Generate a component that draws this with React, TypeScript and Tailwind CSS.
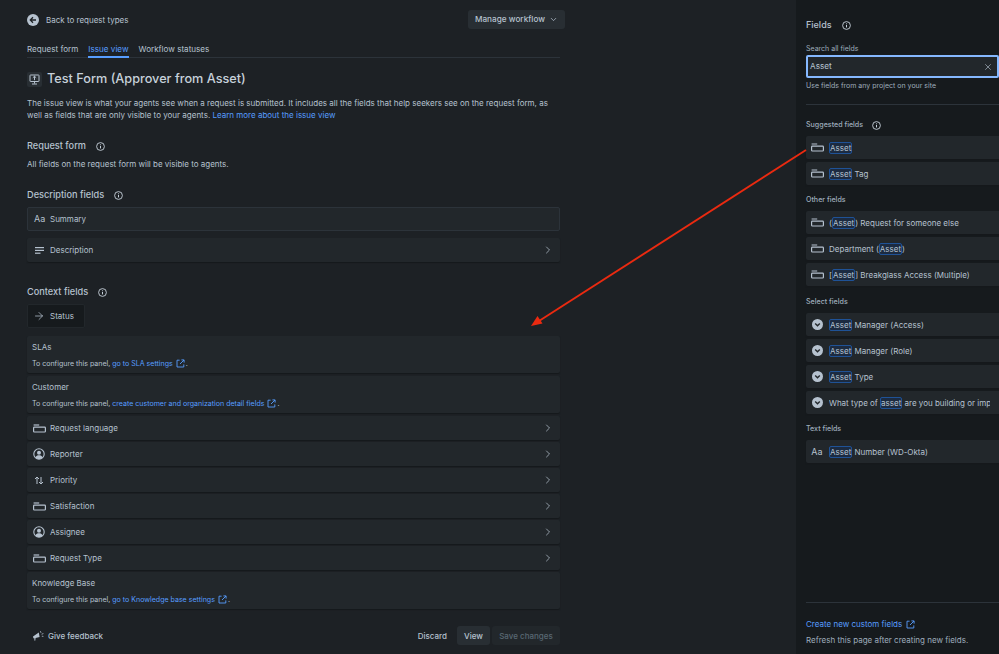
import React from "react";
import { ChevronDown, ChevronRight, X, ArrowRight } from "lucide-react";

const FieldIcon = () => (
  <svg width="13" height="9" viewBox="0 0 13 9" fill="none" stroke="#b6c2cf" strokeWidth="1.2" className="shrink-0">
    <path d="M0.6 1H6.2" />
    <rect x="0.6" y="3.2" width="11.8" height="4.8" rx="0.8" />
  </svg>
);
const PersonIcon = () => (
  <svg width="12" height="12" viewBox="0 0 12 12" className="shrink-0">
    <circle cx="6" cy="6" r="5.2" fill="none" stroke="#b6c2cf" strokeWidth="1.1" />
    <circle cx="6" cy="4.7" r="2" fill="#b6c2cf" />
    <path d="M2.6 9.4C3.2 7.8 4.4 7.3 6 7.3s2.8.5 3.4 2.1C8.5 10.4 7.3 10.9 6 10.9s-2.5-.5-3.4-1.5Z" fill="#b6c2cf" />
  </svg>
);
const PriorityIcon = () => (
  <svg width="10" height="9" viewBox="0 0 10 9" fill="none" stroke="#b6c2cf" strokeWidth="1" className="shrink-0">
    <path d="M3 8V1M1 3l2-2 2 2" />
    <path d="M7 1v7M5 6l2 2 2-2" />
  </svg>
);
const LinesIcon = () => (
  <svg width="9" height="7" viewBox="0 0 9 7" fill="#b6c2cf" className="shrink-0">
    <rect width="9" height="1.2" />
    <rect y="2.8" width="9" height="1.2" />
    <rect y="5.6" width="5.5" height="1.2" />
  </svg>
);
const SelectIcon = () => (
  <svg width="11" height="11" viewBox="0 0 11 11" className="shrink-0">
    <circle cx="5.5" cy="5.5" r="5.5" fill="#b6c2cf" />
    <path d="M3.2 4.6 5.5 6.8l2.3-2.2" fill="none" stroke="#22272b" strokeWidth="1.4" />
  </svg>
);
const InfoIcon = () => (
  <svg width="9" height="9" viewBox="0 0 9 9" fill="none" stroke="#c7d1db" strokeWidth="0.9" className="shrink-0">
    <circle cx="4.5" cy="4.5" r="3.9" />
    <path d="M4.5 4v2.4" strokeWidth="1" />
    <circle cx="4.5" cy="2.7" r="0.55" fill="#c7d1db" stroke="none" />
  </svg>
);
const ExternalIcon = () => (
  <svg width="9" height="9" viewBox="0 0 9 9" fill="none" stroke="#579dff" strokeWidth="0.9" className="inline-block shrink-0">
    <path d="M3.6 1.2H1v6.8h6.8V5.4" />
    <path d="M4 5 8 1M5.4 .9h2.7v2.7" />
  </svg>
);
const Mega = () => (
  <svg width="12" height="12" viewBox="0 0 12 12" className="shrink-0" fill="#b6c2cf">
    <path d="M1 6.6 6.8 2.4 7.6 7 3.6 8 3.2 10.8 2.4 10.6 2.4 8.2 1.4 8.2Z" />
    <path d="M8.4 1.2 9 2.8M9.6 4.2l1.8-.6M9.8 6.2l1.6.2" stroke="#b6c2cf" strokeWidth="0.8" fill="none" />
  </svg>
);

const H = ({ children }: { children: React.ReactNode }) => (
  <span className="rounded-[2px] border border-[#1f5296] bg-[#1c2b41]">{children}</span>
);

const Row = ({ icon, label }: { icon: React.ReactNode; label: string }) => (
  <div className="flex h-6 items-center rounded-[2px] bg-[#22272b] pl-[3px] pr-[6px] shadow-[0_1px_1px_#16191c]">
    <span className="flex w-[18px] shrink-0 justify-center">{icon}</span>
    <span className="ml-[2px] text-[8px]">{label}</span>
    <ChevronRight size={12} strokeWidth={1.5} className="ml-auto" />
  </div>
);

const Panel = ({ title, link }: { title: string; link: string }) => (
  <div className="mb-px flex h-[37px] flex-col justify-center gap-[7px] rounded-[2px] bg-[#22272b] px-[5px] shadow-[0_1px_1px_#16191c]">
    <div className="text-[8px] leading-[10px]">{title}</div>
    <div className="flex items-center gap-[3px] text-[7.05px] leading-[9px]">
      <span>To configure this panel, <span className="text-[#579dff]">{link}</span></span>
      <ExternalIcon />
      <span className="-ml-[2px]">.</span>
    </div>
  </div>
);

const Heading = ({ children }: { children: string }) => (
  <div className="flex items-center gap-[10px] text-[9.2px] font-medium leading-3">
    {children}
    <InfoIcon />
  </div>
);

const SideRow = ({ icon, children }: { icon: React.ReactNode; children: React.ReactNode }) => (
  <div className="flex h-[23px] items-center overflow-hidden rounded-l-[2px] bg-[#22272b] pl-[5px] shadow-[0_1px_1px_#16191c]">
    <span className="flex w-[12px] shrink-0 justify-center">{icon}</span>
    <span className="ml-[6px] whitespace-nowrap text-[8px]">{children}</span>
  </div>
);

const SideLabel = ({ children, className }: { children: React.ReactNode; className: string }) => (
  <div className={`text-[7.1px] font-medium leading-[10px] text-[#9fadbc] ${className}`}>{children}</div>
);

export default function App() {
  return (
    <div className="relative flex h-[654px] w-[999px] overflow-hidden bg-[#1d2125] text-[#b6c2cf] [font-family:Inter,'Liberation_Sans',sans-serif]">
      <main className="w-[796px] shrink-0 pl-[27px] pr-[236px]">
        <div className="flex h-[29px] items-center justify-between pt-[10px]">
          <div className="flex items-center gap-[7px] text-[8px]">
            <span className="flex h-[12px] w-[12px] items-center justify-center rounded-full bg-[#b6c2cf]">
              <svg width="8" height="8" viewBox="0 0 8 8" fill="none" stroke="#1d2125" strokeWidth="1.3">
                <path d="M7 4H1.5M4 1.3 1.3 4 4 6.7" />
              </svg>
            </span>
            Back to request types
          </div>
          <div className="-mr-[5px] flex h-[19px] w-[97px] items-center justify-center gap-[4px] rounded-[3px] bg-[#282e33] text-[8.2px] font-medium">
            Manage workflow
            <ChevronDown size={9} strokeWidth={2} />
          </div>
        </div>

        <div className="mt-[10px] flex h-[19px] gap-[10px] border-b border-[#2c333a] text-[8.1px]">
          <span className="pt-[4px]">Request form</span>
          <span className="-mb-px border-b-2 border-[#579dff] pt-[4px] text-[#579dff]">Issue view</span>
          <span className="pt-[4px]">Workflow statuses</span>
        </div>

        <div className="mt-[11px] flex h-[20px] items-center gap-[5px]">
          <span className="flex h-[15px] w-[15px] items-center justify-center rounded-[2px] bg-[#282e33]">
            <svg width="11" height="11" viewBox="0 0 11 11" fill="none" stroke="#b6c2cf" strokeWidth="1">
              <rect x="1" y="1" width="9" height="6.5" rx=".5" />
              <path d="M5.5 2.2v4M3.8 3.8 5.5 2.2l1.7 1.6M5.5 7.5v2M3 10h5" />
            </svg>
          </span>
          <h1 className="text-[12.7px] font-medium leading-5 text-[#c7d1db]">Test Form (Approver from Asset)</h1>
        </div>

        <p className="mt-[8px] text-[8px] leading-[12px]">
          The issue view is what your agents see when a request is submitted. It includes all the fields that help seekers see on the request form, as well as fields that are only visible to your agents. <span className="text-[#579dff]">Learn more about the issue view</span>
        </p>

        <div className="mt-[19px]"><Heading>Request form</Heading></div>
        <p className="mt-[6px] text-[8px] leading-3">All fields on the request form will be visible to agents.</p>

        <div className="mt-[19px]"><Heading>Description fields</Heading></div>

        <div className="mt-[6px] flex h-6 items-center rounded-[2px] border border-[#2c333a] bg-[#22272b] pl-[6px] text-[8px]">
          <span className="w-[16px] text-[9px]">Aa</span>
          <span>Summary</span>
        </div>
        <div className="mt-[7px]"><Row icon={<LinesIcon />} label="Description" /></div>

        <div className="mt-[24px]"><Heading>Context fields</Heading></div>
        <div className="mt-[6px] flex h-6 w-[58px] items-center gap-[5px] rounded-[2px] border border-[#22272b] bg-[#161a1d] pl-[5px] text-[8px]">
          <ArrowRight size={12} strokeWidth={1.5} />
          Status
        </div>

        <div className="mt-[8px] flex flex-col gap-[2px]">
          <Panel title="SLAs" link="go to SLA settings" />
          <Panel title="Customer" link="create customer and organization detail fields" />
          <Row icon={<FieldIcon />} label="Request language" />
          <Row icon={<PersonIcon />} label="Reporter" />
          <Row icon={<PriorityIcon />} label="Priority" />
          <Row icon={<FieldIcon />} label="Satisfaction" />
          <Row icon={<PersonIcon />} label="Assignee" />
          <Row icon={<FieldIcon />} label="Request Type" />
          <Panel title="Knowledge Base" link="go to Knowledge base settings" />
        </div>

        <div className="mt-[16px] flex h-[19px] items-center text-[8px] font-medium">
          <span className="ml-[5px] flex items-center gap-[4px]"><Mega />Give feedback</span>
          <span className="ml-auto mr-[10px]">Discard</span>
          <span className="flex h-[19px] w-[33px] items-center justify-center rounded-[3px] bg-[#282e33]">View</span>
          <span className="ml-[2px] flex h-[19px] w-[68px] items-center justify-center rounded-[3px] bg-[#22272b] text-[#596773]">Save changes</span>
        </div>
      </main>

      <aside className="flex min-w-0 flex-1 flex-col bg-[#161a1d] pl-[10px]">
        <div className="mt-[19px] flex items-center gap-[10px] text-[9px] font-medium leading-3">Fields <InfoIcon /></div>
        <div className="mt-[13px] text-[7px] leading-[10px] text-[#9fadbc]">Search all fields</div>
        <div className="mt-[1px] flex h-[23px] items-center justify-between rounded-[2px] border-2 border-[#85b8ff] bg-[#22272b] pl-[2px] pr-[4px] text-[8.2px]">
          Asset
          <X size={10} strokeWidth={1.5} />
        </div>
        <div className="mt-[3px] text-[7px] leading-[10px] text-[#9fadbc]">Use fields from any project on your site</div>
        <div className="mt-[13px] h-px bg-[#2c333a]" />
        <div className="mt-[15px] flex items-center gap-[9px]">
          <SideLabel className="">Suggested fields</SideLabel>
          <InfoIcon />
        </div>
        <div className="mt-[6px] flex flex-col gap-[3px]">
          <SideRow icon={<FieldIcon />}><H>Asset</H></SideRow>
          <SideRow icon={<FieldIcon />}><H>Asset</H> Tag</SideRow>
        </div>
        <SideLabel className="mt-[10px]">Other fields</SideLabel>
        <div className="mt-[6px] flex flex-col gap-[3px]">
          <SideRow icon={<FieldIcon />}>(<H>Asset</H>) Request for someone else</SideRow>
          <SideRow icon={<FieldIcon />}>Department (<H>Asset</H>)</SideRow>
          <SideRow icon={<FieldIcon />}>[<H>Asset</H>] Breakglass Access (Multiple)</SideRow>
        </div>
        <SideLabel className="mt-[11px]">Select fields</SideLabel>
        <div className="mt-[6px] flex flex-col gap-[3px]">
          <SideRow icon={<SelectIcon />}><H>Asset</H> Manager (Access)</SideRow>
          <SideRow icon={<SelectIcon />}><H>Asset</H> Manager (Role)</SideRow>
          <SideRow icon={<SelectIcon />}><H>Asset</H> Type</SideRow>
          <SideRow icon={<SelectIcon />}>
            <span className="block w-[161px] overflow-hidden">What type of <H>asset</H> are you building or implementing</span>
          </SideRow>
        </div>
        <SideLabel className="mt-[10px]">Text fields</SideLabel>
        <div className="mt-[6px]">
          <SideRow icon={<span className="text-[9px]">Aa</span>}><H>Asset</H> Number (WD-Okta)</SideRow>
        </div>
        <div className="mt-auto h-px bg-[#2c333a]" />
        <div className="mt-[16px] flex items-center gap-[4px] text-[8px] leading-[10px] text-[#579dff]">Create new custom fields <ExternalIcon /></div>
        <div className="mb-[9px] mt-[6px] text-[8px] leading-[10px] text-[#9fadbc]">Refresh this page after creating new fields.</div>
      </aside>

      <svg className="pointer-events-none absolute left-0 top-0" width="999" height="654" viewBox="0 0 999 654" fill="none">
        <path d="M806 150 539 321" stroke="#ea2a10" strokeWidth="1.9" />
        <path d="M531 326 542.5 323.5 537.5 316Z" fill="#ea2a10" />
      </svg>
    </div>
  );
}
